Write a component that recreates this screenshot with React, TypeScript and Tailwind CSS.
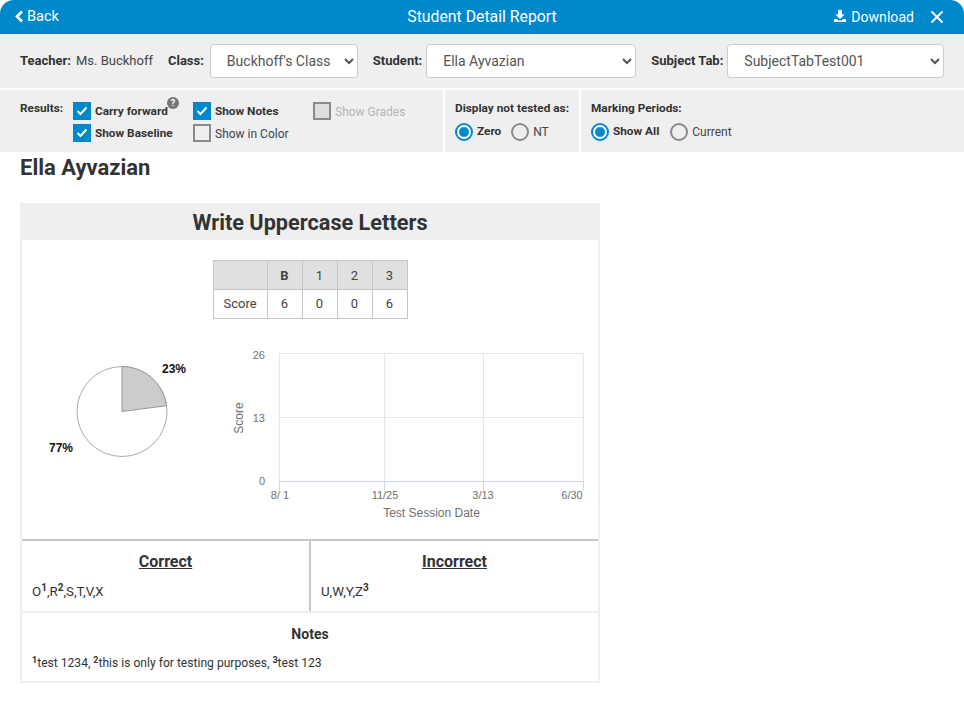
import React from "react";
import { X } from "lucide-react";

const font = { fontFamily: "Roboto, sans-serif" };

function Check({ checked, disabled }: { checked?: boolean; disabled?: boolean }) {
  if (disabled) return <span className="block w-[18px] h-[18px] border-2 border-[#8a8a8a] bg-[#dedede] shrink-0" />;
  if (!checked) return <span className="block w-[18px] h-[18px] border-2 border-[#8a8a8a] bg-transparent shrink-0" />;
  return (
    <span className="flex items-center justify-center w-[18px] h-[18px] bg-[#0088cc] shrink-0">
      <svg width="12" height="10" viewBox="0 0 12 10" fill="none">
        <path d="M1.500 5 L4.500 8 L10.500 1.500" stroke="white" strokeWidth="2" />
      </svg>
    </span>
  );
}

function CheckRow({ label, checked, bold, disabled }: { label: string; checked?: boolean; bold?: boolean; disabled?: boolean }) {
  return (
    <div className="flex items-center gap-1 h-[18px]">
      <Check checked={checked} disabled={disabled} />
      <span className={`mt-[2px] ${bold ? "text-[11.800px] font-bold text-[#333]" : disabled ? "text-[12px] text-[#b5b5b5]" : "text-[12px] text-[#444]"}`}>{label}</span>
    </div>
  );
}

function Radio({ label, on }: { label: string; on?: boolean }) {
  return (
    <div className="flex items-center gap-1">
      {on ? (
        <span className="flex items-center justify-center w-[18px] h-[18px] rounded-full border-2 border-[#0088cc] bg-white">
          <span className="block w-[10px] h-[10px] rounded-full bg-[#0088cc]" />
        </span>
      ) : (
        <span className="block w-[18px] h-[18px] rounded-full border-2 border-[#8a8a8a]" />
      )}
      <span className={`mt-[1px] ${on ? "text-[11.800px] font-bold text-[#333]" : "text-[12px] text-[#444]"}`}>{label}</span>
    </div>
  );
}

function Select({ value, w }: { value: string; w: string }) {
  return (
    <select
      defaultValue={value}
      className={`${w} h-[34px] pl-[12px] bg-white border border-[#ccc] rounded-[4px] text-[14px] text-[#555]`}
    >
      <option>{value}</option>
    </select>
  );
}

function Chart() {
  const gray = "#707070";
  return (
    <svg width="370" height="190" viewBox="0 0 370 190" className="block" style={{ fontFamily: "'Liberation Sans', sans-serif" }}>
      <g fill="none" stroke="#e6e6e6">
        <path d="M59.500 13.500H363.500M59.500 77.500H363.500M164.500 13.500V141M263.500 13.500V141M363.500 13.500V141M59.500 13.500V141" />
      </g>
      <path d="M59.500 141.500H363.500M59.500 141.500V150M164.500 141.500V150M263.500 141.500V150M363.500 141.500V150" stroke="#ccd6eb" fill="none" />
      <g fontSize="11" fill={gray}>
        <text x="45" y="19" textAnchor="end">26</text>
        <text x="45" y="82" textAnchor="end">13</text>
        <text x="45" y="145" textAnchor="end">0</text>
        <text x="60" y="159" textAnchor="middle">8/ 1</text>
        <text x="165" y="159" textAnchor="middle">11/25</text>
        <text x="263" y="159" textAnchor="middle">3/13</text>
        <text x="352" y="159" textAnchor="middle">6/30</text>
        <text x="23" y="78" fontSize="12" textAnchor="middle" transform="rotate(-90 23 78)">Score</text>
        <text x="211.500" y="177" fontSize="12" textAnchor="middle">Test Session Date</text>
      </g>
    </svg>
  );
}

function Pie() {
  return (
    <svg width="190" height="190" viewBox="0 0 190 190" className="block" style={{ fontFamily: "'Liberation Sans', sans-serif" }}>
      <circle cx="102" cy="71.500" r="45" fill="white" stroke="#aaa" />
      <path d="M102 71.500 V26.500 A45 45 0 0 1 146.600 65.700 Z" fill="#cccccc" stroke="#999" />
      <text x="142" y="33" fontSize="12" fontWeight="bold" fill="#111">23%</text>
      <text x="29" y="112" fontSize="12" fontWeight="bold" fill="#111">77%</text>
    </svg>
  );
}

export default function App() {
  return (
    <div style={font} className="w-[964px] h-[703px] bg-white overflow-hidden text-[#333]">
      <header className="relative h-[34px] bg-[#0088cc] rounded-t-[14px] flex items-center justify-between pl-[15px] pr-[17px] text-white text-[14px]">
        <div className="flex items-center -mt-[2px]">
          <svg width="9" height="13" viewBox="0 0 9 13" fill="none">
            <path d="M7 1.500 L2 6.500 L7 11.500" stroke="white" strokeWidth="2.600" />
          </svg>
          <span className="ml-[3px] text-[14.500px] mt-[1px]">Back</span>
        </div>
        <div className="absolute left-0 right-0 text-center text-[15.800px] -mt-[1px] pointer-events-none">Student Detail Report</div>
        <div className="flex items-center">
          <svg width="14" height="14" viewBox="0 0 14 14" fill="white" className="-mt-[2px]">
            <path d="M5 1h4v4.500h2.500L7 10 2.500 5.500H5z" />
            <path d="M1 10h3l1.500 1.500h3L10 10h3v3H1z" />
          </svg>
          <span className="ml-[4px] tracking-[0.05px]">Download</span>
          <X size={20} strokeWidth={2.200} className="ml-[13px]" />
        </div>
      </header>

      <div className="h-[54px] bg-[#efefef] flex items-center pl-[20px] text-[13px]">
        <b className="text-[#333]">Teacher:</b>
        <span className="ml-[5px] text-[#444]">Ms. Buckhoff</span>
        <b className="ml-[15px]">Class:</b>
        <div className="ml-[6px] flex"><Select value="Buckhoff's Class" w="w-[148px]" /></div>
        <b className="ml-[15px]">Student:</b>
        <div className="ml-[4px] flex"><Select value="Ella Ayvazian" w="w-[210px]" /></div>
        <b className="ml-[15px]">Subject Tab:</b>
        <div className="ml-[4px] flex"><Select value="SubjectTabTest001" w="w-[217px]" /></div>
      </div>

      <div className="h-[2px]" />

      <div className="h-[62px] flex gap-[2px]">
        <div className="w-[443px] bg-[#efefef] flex pl-[20px] pt-[10px]">
          <b className="text-[11.800px] leading-[16px] w-[53px] shrink-0">Results:</b>
          <div className="mt-[2px] flex flex-col gap-[4px] w-[120px]">
            <div className="relative">
              <CheckRow label="Carry forward" checked bold />
              <span className="absolute left-[94px] top-[-5px] w-[12px] h-[12px] rounded-full bg-[#777] text-white text-[9px] font-bold leading-[12px] text-center">?</span>
            </div>
            <CheckRow label="Show Baseline" checked bold />
          </div>
          <div className="mt-[2px] flex flex-col gap-[4px] w-[120px]">
            <CheckRow label="Show Notes" checked bold />
            <CheckRow label="Show in Color" />
          </div>
          <div className="mt-[2px]">
            <CheckRow label="Show Grades" disabled />
          </div>
        </div>
        <div className="w-[134px] bg-[#efefef] pl-[10px] pt-[10px]">
          <b className="block text-[11.800px] leading-[16px]">Display not tested as:</b>
          <div className="flex gap-[10px] mt-[6px]">
            <Radio label="Zero" on />
            <Radio label="NT" />
          </div>
        </div>
        <div className="flex-1 bg-[#efefef] pl-[10px] pt-[10px]">
          <b className="block text-[11.800px] leading-[16px]">Marking Periods:</b>
          <div className="flex gap-[11px] mt-[6px]">
            <Radio label="Show All" on />
            <Radio label="Current" />
          </div>
        </div>
      </div>

      <h1 className="ml-[20px] mt-[2px] text-[22px] leading-[28px] font-bold text-[#333]">Ella Ayvazian</h1>

      <section className="ml-[20px] mt-[21px] w-[580px] border-2 border-t-0 border-[#efefef]">
        <h2 className="h-[37px] bg-[#efefef] text-center text-[21.700px] leading-[40px] font-bold text-[#333] -mx-[2px]">Write Uppercase Letters</h2>

        <div className="h-[299px] pt-[20px]">
          <table className="mx-auto border-collapse text-[13px] text-[#444] leading-none">
            <thead>
              <tr className="h-[29px] bg-[#e0e0e0]">
                <th className="w-[54px] border border-[#c4c4c4]" />
                <th className="w-[35px] border border-[#c4c4c4] font-bold">B</th>
                <th className="w-[35px] border border-[#c4c4c4] font-normal">1</th>
                <th className="w-[35px] border border-[#c4c4c4] font-normal">2</th>
                <th className="w-[35px] border border-[#c4c4c4] font-normal">3</th>
              </tr>
            </thead>
            <tbody>
              <tr className="h-[29px] text-center">
                <td className="border border-[#c4c4c4] pb-[2px]">Score</td>
                <td className="border border-[#c4c4c4] pb-[2px]">6</td>
                <td className="border border-[#c4c4c4] pb-[2px]">0</td>
                <td className="border border-[#c4c4c4] pb-[2px]">0</td>
                <td className="border border-[#c4c4c4] pb-[2px]">6</td>
              </tr>
            </tbody>
          </table>
          <div className="flex mt-[21px] -ml-[2px]">
            <div className="w-[200px] shrink-0"><Pie /></div>
            <Chart />
          </div>
        </div>

        <div className="flex border-t-2 border-[#c8c8c8] h-[72px]">
          <div className="w-[289px] border-r-2 border-[#c8c8c8] px-[10px]">
            <div className="text-center text-[16px] font-bold underline leading-[20px] mt-[11px]">Correct</div>
            <div className="mt-[10px] text-[13.300px] leading-[20px] text-[#333]">O<sup className="font-bold text-[10px]">1</sup>,R<sup className="font-bold text-[10px]">2</sup>,S,T,V,X</div>
          </div>
          <div className="flex-1 px-[10px]">
            <div className="text-center text-[16px] font-bold underline leading-[20px] mt-[11px]">Incorrect</div>
            <div className="mt-[10px] text-[13.300px] leading-[20px] text-[#333]">U,W,Y,Z<sup className="font-bold text-[10px]">3</sup></div>
          </div>
        </div>

        <div className="border-t-2 border-[#efefef] h-[70px] px-[10px]">
          <div className="text-center text-[14px] font-bold leading-[20px] mt-[11px]">Notes</div>
          <div className="mt-[9px] text-[12.100px] leading-[20px] text-[#333]">
            <sup className="font-bold text-[9px]">1</sup>test 1234, <sup className="font-bold text-[9px]">2</sup>this is only for testing purposes, <sup className="font-bold text-[9px]">3</sup>test 123
          </div>
        </div>
      </section>
    </div>
  );
}
